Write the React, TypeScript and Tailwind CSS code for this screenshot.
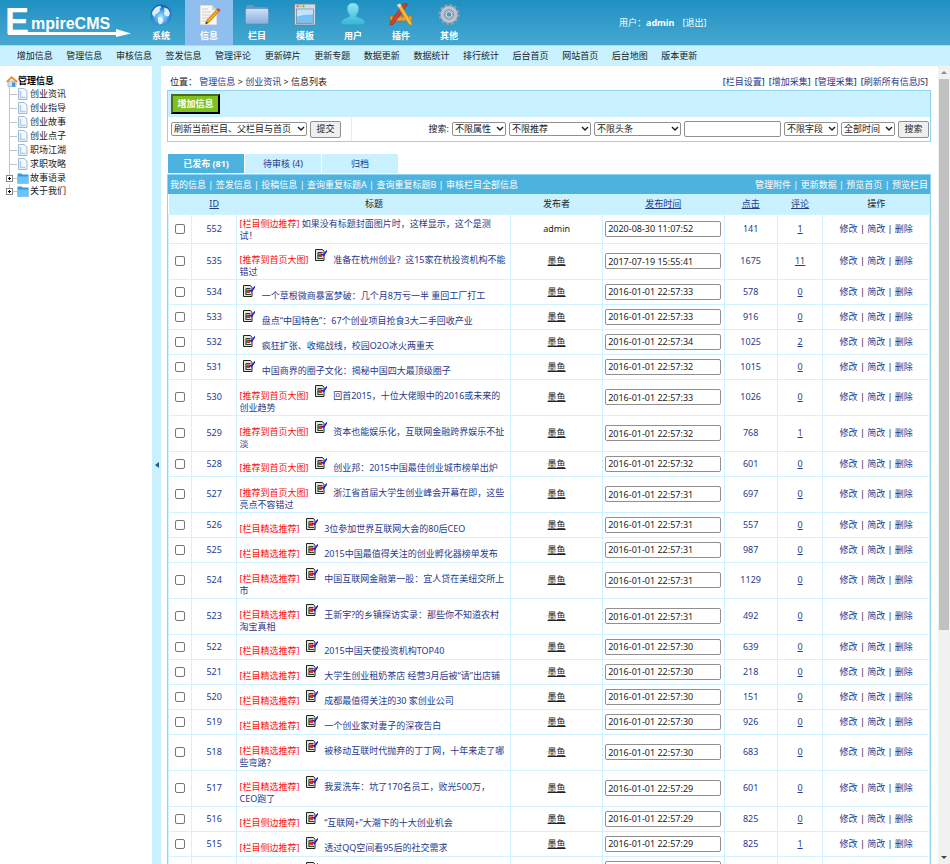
import React from 'react';

const MENU = ['系统', '信息', '栏目', '模板', '用户', '插件', '其他'];

const SUB_MENU = [
  '增加信息', '管理信息', '审核信息', '签发信息', '管理评论', '更新碎片', '更新专题',
  '数据更新', '数据统计', '排行统计', '后台首页', '网站首页', '后台地图', '版本更新',
];

const TREE = [
  { name: '创业资讯' },
  { name: '创业指导' },
  { name: '创业故事' },
  { name: '创业点子' },
  { name: '职场江湖' },
  { name: '求职攻略' },
  { name: '故事语录', folder: true },
  { name: '关于我们', folder: true },
];

const TOOLS = ['栏目设置', '增加采集', '管理采集', '刷新所有信息JS'];

interface News {
  id: number;
  flag?: string;
  title: string;
  user?: string;
  time: string;
  clicks: number;
  comments: number;
  noPic?: boolean;
}

const SIDE = '栏目侧边推荐';
const BEST = '栏目精选推荐';
const HOME = '推荐到首页大图';

const NEWS: News[] = [
  { id: 552, flag: SIDE, title: '如果没有标题封面图片时，这样显示，这个是测试！', user: 'admin', time: '2020-08-30 11:07:52', clicks: 141, comments: 1, noPic: true },
  { id: 535, flag: HOME, title: '准备在杭州创业？这15家在杭投资机构不能错过', time: '2017-07-19 15:55:41', clicks: 1675, comments: 11 },
  { id: 534, title: '一个草根微商暴富梦破：几个月8万亏一半 重回工厂打工', time: '2016-01-01 22:57:33', clicks: 578, comments: 0 },
  { id: 533, title: '盘点“中国特色”：67个创业项目抢食3大二手回收产业', time: '2016-01-01 22:57:33', clicks: 916, comments: 0 },
  { id: 532, title: '疯狂扩张、收缩战线，校园O2O冰火两重天', time: '2016-01-01 22:57:34', clicks: 1025, comments: 2 },
  { id: 531, title: '中国商界的圈子文化：揭秘中国四大最顶级圈子', time: '2016-01-01 22:57:32', clicks: 1015, comments: 0 },
  { id: 530, flag: HOME, title: '回首2015，十位大佬眼中的2016或未来的创业趋势', time: '2016-01-01 22:57:33', clicks: 1026, comments: 0 },
  { id: 529, flag: HOME, title: '资本也能娱乐化，互联网金融跨界娱乐不扯淡', time: '2016-01-01 22:57:32', clicks: 768, comments: 1 },
  { id: 528, flag: HOME, title: '创业邦：2015中国最佳创业城市榜单出炉', time: '2016-01-01 22:57:32', clicks: 601, comments: 0 },
  { id: 527, flag: HOME, title: '浙江省首届大学生创业峰会开幕在即，这些亮点不容错过', time: '2016-01-01 22:57:31', clicks: 697, comments: 0 },
  { id: 526, flag: BEST, title: '3位参加世界互联网大会的80后CEO', time: '2016-01-01 22:57:31', clicks: 557, comments: 0 },
  { id: 525, flag: BEST, title: '2015中国最值得关注的创业孵化器榜单发布', time: '2016-01-01 22:57:31', clicks: 987, comments: 0 },
  { id: 524, flag: BEST, title: '中国互联网金融第一股：宜人贷在美纽交所上市', time: '2016-01-01 22:57:31', clicks: 1129, comments: 0 },
  { id: 523, flag: BEST, title: '王新宇?的乡镇探访实录：那些你不知道农村淘宝真相', time: '2016-01-01 22:57:31', clicks: 492, comments: 0 },
  { id: 522, flag: BEST, title: '2015中国天使投资机构TOP40', time: '2016-01-01 22:57:30', clicks: 639, comments: 0 },
  { id: 521, flag: BEST, title: '大学生创业租奶茶店 经营3月后被“请”出店铺', time: '2016-01-01 22:57:30', clicks: 218, comments: 0 },
  { id: 520, flag: BEST, title: '成都最值得关注的30 家创业公司', time: '2016-01-01 22:57:30', clicks: 151, comments: 0 },
  { id: 519, flag: BEST, title: '一个创业家对妻子的深夜告白', time: '2016-01-01 22:57:30', clicks: 926, comments: 0 },
  { id: 518, flag: BEST, title: '被移动互联时代抛弃的丁丁网，十年来走了哪些弯路？', time: '2016-01-01 22:57:30', clicks: 683, comments: 0 },
  { id: 517, flag: BEST, title: '我爱洗车：坑了170名员工，败光500万，CEO跑了', time: '2016-01-01 22:57:29', clicks: 601, comments: 0 },
  { id: 516, flag: SIDE, title: '“互联网+”大潮下的十大创业机会', time: '2016-01-01 22:57:29', clicks: 825, comments: 0 },
  { id: 515, flag: SIDE, title: '透过QQ空间看95后的社交需求', time: '2016-01-01 22:57:29', clicks: 825, comments: 1 },
  { id: 514, flag: SIDE, title: '创业者如何组建团队', time: '2016-01-01 22:57:29', clicks: 702, comments: 0 },
];

function MenuIcon({ index }: { index: number }) {
  return (
    <svg viewBox="0 0 24 24" className="h-6 w-6" aria-hidden="true">
      {index === 0 && (
        <g>
          <defs>
            <radialGradient id="globe" cx=".5" cy=".6" r=".55">
              <stop offset="0" stopColor="#a9e6ff" />
              <stop offset=".6" stopColor="#3f9fe8" />
              <stop offset="1" stopColor="#1460b4" />
            </radialGradient>
          </defs>
          <circle cx="12" cy="12" r="10.500" fill="url(#globe)" />
          <path d="M4.500 7c1.500-2.500 4-4 7-4.200l.5 1.700-1.500 1.500.5 2-3 2.500-1.500 1-.5 2.500-2.500-2-.5-2.500zM9 14l3.500.5 2 2.500-1.500 3.500-2.500 1-1.500-3zM15 4.500l4 1.500 2 4-1 3-2.500.5-2.500-2.500.5-3z" fill="#eefaff" opacity=".9" />
        </g>
      )}
      {index === 1 && (
        <g>
          <path d="M3 2h12l5 5v15H3z" fill="#f7f7f5" stroke="#b3b3b3" strokeWidth=".7" />
          <path d="M15 2l5 5h-5z" fill="#cfd3d8" />
          <path d="M5 6h6M5 9h9M5 12h8M5 15h6M5 18h4" stroke="#c6c6c6" strokeWidth=".9" />
          <path d="M20 6l2.500 2L12 19.500 8.500 21l1-3.500z" fill="#f2a51b" stroke="#a86708" strokeWidth=".6" />
          <path d="M19.500 6.500l1.500-1.500 2.500 2L22 8.800z" fill="#d9463c" />
          <path d="M9.300 18.500l2 1.500-2.800 1z" fill="#4a3421" />
        </g>
      )}
      {index === 2 && (
        <g>
          <defs>
            <linearGradient id="folder" x1="0" y1="0" x2="0" y2="1">
              <stop offset="0" stopColor="#cfe2f5" />
              <stop offset="1" stopColor="#86aede" />
            </linearGradient>
          </defs>
          <path d="M1 6V3.500q0-1.500 1.500-1.500H8q1 0 1.500 2h11.500q2 0 2 2v3H1z" fill="#6d93bf" />
          <rect x=".5" y="5.500" width="23" height="15.500" rx="1.500" fill="url(#folder)" stroke="#5f88b8" strokeWidth=".6" />
        </g>
      )}
      {index === 3 && (
        <g>
          <rect x="1.500" y="1" width="21" height="21" rx="1" fill="#d5dade" stroke="#727d86" strokeWidth=".8" />
          <circle cx="4.500" cy="3.300" r="1" fill="#e4483b" />
          <circle cx="7.500" cy="3.300" r="1" fill="#f1b62c" />
          <circle cx="10.500" cy="3.300" r="1" fill="#5fb53c" />
          <rect x="3.500" y="6" width="17" height="14.500" fill="#7cc0f0" stroke="#4784b4" strokeWidth=".6" />
          <path d="M4 6.500h16v5q-8-.5-16 2z" fill="#c2e4fb" />
        </g>
      )}
      {index === 4 && (
        <g>
          <defs>
            <linearGradient id="person" x1="0" y1="0" x2="0" y2="1">
              <stop offset="0" stopColor="#8fe6f4" />
              <stop offset="1" stopColor="#38b7d8" />
            </linearGradient>
          </defs>
          <path d="M12 0c4 0 6 3 5.500 6.500-.3 3-1.500 4.500-2.500 5.500v2c3 1 7 2 8 4.500V21H1v-2.500C2 16 6 15 9 14v-2C8 11 6.800 9.500 6.500 6.500 6 3 8 0 12 0z" fill="url(#person)" stroke="#48c3dc" strokeWidth=".5" />
        </g>
      )}
      {index === 5 && (
        <g>
          <path d="M1 13h22v5H1z" fill="#e3a04c" stroke="#9b6523" strokeWidth=".6" />
          <path d="M4 13v2M7 13v2M10 13v2M13 13v2M16 13v2M19 13v2" stroke="#83541b" strokeWidth=".6" />
          <path d="M15.500 0l3 1.500L4 21.500l-3 .5.500-3.500z" fill="#d2402e" stroke="#832217" strokeWidth=".5" />
          <path d="M8 2l3-1.500L22.500 19l.5 4-3.500-2z" fill="#f4bd35" stroke="#a5701a" strokeWidth=".5" />
          <path d="M8 2l3-1.500 1.500 2.500-3 1.500z" fill="#d9dfe5" />
        </g>
      )}
      {index === 6 && (
        <g fill="none">
          <circle cx="12" cy="11.500" r="9" stroke="#949dad" strokeWidth="3" strokeDasharray="2.700 2.010" />
          <circle cx="12" cy="11.500" r="6" stroke="#bcc4d1" strokeWidth="5" />
          <circle cx="12" cy="11.500" r="4.800" stroke="#8892a4" strokeWidth="1" />
          <circle cx="12" cy="11.500" r="2.800" fill="#5b8fb5" stroke="#e4e8ee" strokeWidth="1" />
        </g>
      )}
    </svg>
  );
}

function Logo() {
  return (
    <svg viewBox="0 0 137 45" className="h-[45px] w-[137px] shrink-0" fill="#fff" fontFamily="Liberation Sans, sans-serif" fontWeight="bold" role="img" aria-label="EmpireCMS">
      <text x="5" y="34" fontSize="36">E</text>
      <text x="31" y="29" fontSize="16">mpireCMS</text>
      <path d="M8 32h108v-3l15 4.500-15 3.500v-2H8z" />
    </svg>
  );
}

function PicIcon() {
  return (
    <svg viewBox="0 0 12 12" className="mx-1 mt-[2px] inline-block h-3 w-3 align-[2px]" aria-hidden="true">
      <path d="M.5.500h7l1.500 2v9H.5z" fill="#e6e6dc" stroke="#222" />
      <path d="M3 3.500h4.500M3 3.500v6h5M3 6.500h3" fill="none" stroke="#1c4a30" strokeWidth="1.200" />
      <rect x="4" y="4.500" width="3" height="3.500" fill="#e8281c" />
      <path d="M6.500 5l2 1.500L12 1.500" fill="none" stroke="#1a1ae0" strokeWidth="1.500" />
    </svg>
  );
}

function TreeIcon({ folder }: { folder?: boolean }) {
  return (
    <svg viewBox="0 0 12 12" className="h-3 w-3 shrink-0" aria-hidden="true">
      {folder ? (
        <g>
          <path d="M.5 1.500h4l1 1h6v9H.5z" fill="#2f9ce8" />
          <path d="M.5 4.500h11v7H.5z" fill="#6cc3f8" />
        </g>
      ) : (
        <g>
          <path d="M1.500 .5h5.500l3 2.500v8.500H1.500z" fill="#f4f9fd" stroke="#8aa8c4" strokeWidth=".8" />
          <path d="M3.500 3v6.500h5" fill="none" stroke="#a9d0ee" strokeWidth="1.500" />
        </g>
      )}
    </svg>
  );
}

function Sidebar() {
  return (
    <nav className="w-[152px] shrink-0 pl-[6px] pt-2">
      <div className="flex h-[13px] items-center font-bold text-black">
        <svg viewBox="0 0 12 12" className="h-3 w-3" aria-hidden="true">
          <path d="M2 6h8v5.500H2z" fill="#cfe3f5" stroke="#6f9cc4" strokeWidth=".6" />
          <path d="M0 6.500L5.500 1 12 6.500l-1.500 1-5-4-4 4z" fill="#f08a1c" />
          <path d="M6 7.500h3v4H6z" fill="#4d8fc9" />
        </svg>
        管理信息
      </div>
      <ul>
        {TREE.map(item => (
          <li key={item.name} className={`flex items-center overflow-hidden ${item.folder ? 'h-[13px]' : 'h-[14px]'}`}>
            {item.folder ? (
              <svg viewBox="0 0 11 14" className="h-[14px] w-[11px] shrink-0" aria-hidden="true">
                <path d="M3.500 0v4M7 7.500h4" stroke="#c4c4c4" />
                <rect x=".5" y="4.500" width="6" height="6" fill="#fff" stroke="#888" />
                <path d="M2 7.500h3M3.500 6v3" stroke="#000" />
              </svg>
            ) : (
              <svg viewBox="0 0 11 14" className="h-[14px] w-[11px] shrink-0" aria-hidden="true">
                <path d="M3.500 0v14M3.500 7.500H11" fill="none" stroke="#c4c4c4" />
              </svg>
            )}
            <TreeIcon folder={item.folder} />
            <a href="#" className="ml-px text-[#222]">{item.name}</a>
          </li>
        ))}
      </ul>
    </nav>
  );
}

function Select({ label, className }: { label: string; className: string }) {
  return (
    <span className={`relative inline-block h-[14px] ${className}`}>
      <select aria-label={label} className="block h-full w-full appearance-none rounded-[2px] border border-[#909090] bg-white pl-[2px] text-[#222]">
        <option>{label}</option>
      </select>
      <svg viewBox="0 0 8 6" className="pointer-events-none absolute right-[2px] top-1 h-[6px] w-2" aria-hidden="true">
        <path d="M1 1l3 3 3-3" fill="none" stroke="#222" strokeWidth="1.500" />
      </svg>
    </span>
  );
}

function Links({ items }: { items: string[] }) {
  return (
    <span>
      {items.map((item, i) => (
        <React.Fragment key={item}>
          {i > 0 && ' | '}
          <a href="#">{item}</a>
        </React.Fragment>
      ))}
    </span>
  );
}

function NewsRow({ row }: { row: News }) {
  return (
    <tr className="h-[25px] text-center *:border *:border-[#d3f2ff]">
      <td>
        <input type="checkbox" aria-label={`选择 ${row.id}`} className="mx-auto block h-[10px] w-[10px] appearance-none rounded-[2px] border border-[#767676] bg-white" />
      </td>
      <td className="text-[#1f3a8c]">{row.id}</td>
      <td className="pb-px pl-[2px] pr-1 pt-[3px] text-left">
        {row.flag && <span className="text-[#ff1010]">[{row.flag}] </span>}
        {!row.noPic && <PicIcon />}
        {!row.noPic && ' '}
        <a href="#" className="text-[#1f3a8c]">{row.title}</a>
      </td>
      <td>{row.user ?? <a href="#" className="underline">墨鱼</a>}</td>
      <td>
        <input aria-label={`发布时间 ${row.id}`} defaultValue={row.time} className="mx-auto block h-4 w-[116px] rounded-[2px] border border-[#909090] bg-white px-[2px] text-[#222]" />
      </td>
      <td><a href="#" className="text-[#1f3a8c]">{row.clicks}</a></td>
      <td><a href="#" className="text-[#1f3a8c] underline">{row.comments}</a></td>
      <td>
        <a href="#" className="text-[#1f3a8c]">修改</a> | <a href="#" className="text-[#1f3a8c]">简改</a> | <a href="#" className="text-[#1f3a8c]">删除</a>
      </td>
    </tr>
  );
}

export default function App() {
  return (
    <div className="flex h-screen flex-col overflow-hidden bg-white font-['Noto_Sans','Noto_Sans_CJK_SC',sans-serif] text-[9px] leading-3 text-[#222]">
      <header className="flex h-[45px] shrink-0 bg-linear-to-b from-[#1e90c2] to-[#45a8d0] text-white">
        <Logo />
        <nav className="flex">
          {MENU.map((name, i) => (
            <a key={name} href="#" className={`flex w-12 flex-col items-center pt-[3px] font-bold ${i === 1 ? 'bg-[#8fbfee]' : ''}`}>
              <MenuIcon index={i} />
              <span className="mt-[3px]">{name}</span>
            </a>
          ))}
        </nav>
        <div className="ml-[146px] flex items-center">
          用户：<b>admin</b>
          <a href="#" className="ml-2">[退出]</a>
        </div>
      </header>
      <nav className="h-[21px] shrink-0 border-t border-[#a9dcf0] bg-[#c9f1ff]">
        <ul className="ml-[10px] flex h-full w-[694px] items-center text-center">
          {SUB_MENU.map(name => (
            <li key={name} className="flex-1"><a href="#">{name}</a></li>
          ))}
        </ul>
      </nav>

      <div className="flex min-h-0 flex-1">
        <Sidebar />
        <button type="button" aria-label="收起菜单" className="flex w-[9px] shrink-0 items-center justify-center bg-[#c9f1ff]">
          <svg viewBox="0 0 4 6" className="h-[6px] w-1" aria-hidden="true"><path d="M4 0v6L0 3z" fill="#1f5f80" /></svg>
        </button>

        <main className="min-w-0 flex-1 overflow-hidden pl-[6px] pr-[7px] pt-[10px]">
          <div className="flex justify-between px-[3px]">
            <div>
              位置： <a href="#" className="text-[#1f3a8c]">管理信息</a> &gt; <a href="#" className="text-[#1f3a8c]">创业资讯</a> &gt; 信息列表
            </div>
            <div className="flex gap-1">
              {TOOLS.map(name => (
                <span key={name}>[<a href="#" className="text-[#1f3a8c]">{name}</a>]</span>
              ))}
            </div>
          </div>

          <div className="mt-[2px] border border-[#93d3f2]">
            <div className="flex h-[26px] items-center bg-[#c9f1ff] pl-[3px]">
              <button type="button" className="h-5 w-[49px] border-2 border-b-black border-l-[#4c6b1c] border-r-black border-t-[#4c6b1c] bg-[#7fc120] font-bold text-white">增加信息</button>
            </div>
            <div className="flex h-6 items-center">
              <div className="flex h-full w-[184px] items-center gap-[3px] border-r border-[#d3f2ff] pl-[3px]">
                <Select label="刷新当前栏目、父栏目与首页" className="w-[136px]" />
                <button type="button" className="h-[17px] w-[31px] rounded-[2px] border border-[#909090] bg-[#efefef] text-[#222]">提交</button>
              </div>
              <div className="flex flex-1 items-center justify-end gap-[3px] pr-px">
                <span>搜索:</span>
                <Select label="不限属性" className="w-[54px]" />
                <Select label="不限推荐" className="w-[82px]" />
                <Select label="不限头条" className="w-[87px]" />
                <input aria-label="关键字" className="h-4 w-[97px] rounded-[2px] border border-[#909090] bg-white px-[2px]" />
                <Select label="不限字段" className="w-[54px]" />
                <Select label="全部时间" className="w-[54px]" />
                <button type="button" className="h-[17px] w-[31px] rounded-[2px] border border-[#909090] bg-[#efefef] text-[#222]">搜索</button>
              </div>
            </div>
          </div>

          <div className="mt-3 flex gap-px pl-px text-center leading-[19px]">
            <a href="#" className="w-[76px] bg-[#4db3de] font-bold text-white">已发布 (81)</a>
            <a href="#" className="w-[76px] bg-[#c9f1ff] text-[#1f3a8c]">待审核 (4)</a>
            <a href="#" className="w-[76px] bg-[#c9f1ff] text-[#1f3a8c]">归档</a>
          </div>

          <div className="mt-px border border-[#93d3f2]">
            <div className="flex h-[19px] items-center justify-between bg-[#4db3de] pl-[2px] pr-[2px] text-white">
              <Links items={['我的信息', '签发信息', '投稿信息', '查询重复标题A', '查询重复标题B', '审核栏目全部信息']} />
              <Links items={['管理附件', '更新数据', '预览首页', '预览栏目']} />
            </div>
            <table className="w-full table-fixed border-collapse">
              <colgroup>
                <col className="w-[3%]" />
                <col className="w-[6%]" />
                <col className="w-[36%]" />
                <col className="w-[12%]" />
                <col className="w-[16%]" />
                <col className="w-[7%]" />
                <col className="w-[6%]" />
                <col className="w-[14%]" />
              </colgroup>
              <thead>
                <tr className="h-5 bg-[#c9f1ff] *:font-normal">
                  <th />
                  <th><a href="#" className="text-[#1f3a8c] underline">ID</a></th>
                  <th>标题</th>
                  <th>发布者</th>
                  <th><a href="#" className="text-[#1f3a8c] underline">发布时间</a></th>
                  <th><a href="#" className="text-[#1f3a8c] underline">点击</a></th>
                  <th><a href="#" className="text-[#1f3a8c] underline">评论</a></th>
                  <th>操作</th>
                </tr>
              </thead>
              <tbody>
                {NEWS.map(row => <NewsRow key={row.id} row={row} />)}
              </tbody>
            </table>
          </div>
        </main>

        <div className="flex w-3 shrink-0 flex-col items-center bg-[#f1f1f1]">
          <svg viewBox="0 0 12 13" className="h-[13px] w-3 shrink-0" aria-hidden="true"><path d="M3 8l3-3 3 3z" fill="#8a8a8a" /></svg>
          <div className="h-[69%] w-[10px] bg-[#c1c1c1]" />
          <svg viewBox="0 0 12 13" className="mt-auto h-[13px] w-3 shrink-0" aria-hidden="true"><path d="M3 5l3 3 3-3z" fill="#444" /></svg>
        </div>
      </div>
    </div>
  );
}
